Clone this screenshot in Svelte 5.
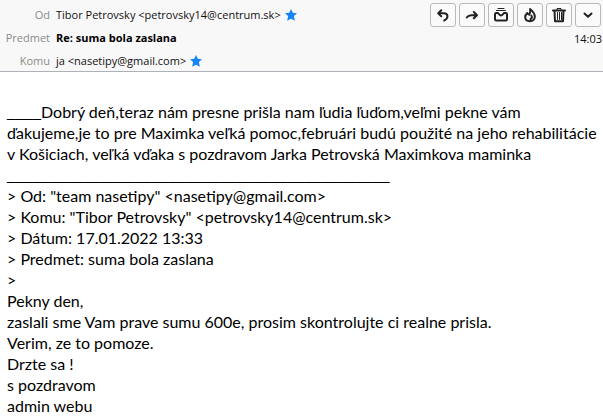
<script lang="ts">
  const quoted = [
    'Od: "team nasetipy" <nasetipy@gmail.com>',
    'Komu: "Tibor Petrovsky" <petrovsky14@centrum.sk>',
    "Dátum: 17.01.2022 13:33",
    "Predmet: suma bola zaslana",
    "",
  ];

  const original = [
    "Pekny den,",
    "zaslali sme Vam prave sumu 600e, prosim skontrolujte ci realne prisla.",
    "Verim, ze to pomoze.",
    "Drzte sa !",
    "s pozdravom",
    "admin webu",
  ];
</script>

{#snippet star()}
  <svg class="star" viewBox="0 0 12 12" width="12" height="12" aria-hidden="true">
    <path
      d="M6 0 7.800 3.800l4.200.4-3.100 2.900.9 4.600L6 9.700l-3.800 2 .9-4.600L0 4.200l4.200-.4z"
    />
  </svg>
{/snippet}

<header>
  <dl>
    <div class="row">
      <dt>Od</dt>
      <dd>Tibor Petrovsky &lt;petrovsky14@centrum.sk&gt; {@render star()}</dd>
    </div>
    <div class="row subject">
      <dt>Predmet</dt>
      <dd>Re: suma bola zaslana</dd>
    </div>
    <div class="row">
      <dt>Komu</dt>
      <dd>ja &lt;nasetipy@gmail.com&gt; {@render star()}</dd>
    </div>
  </dl>
  <div class="side">
    <div class="toolbar">
      <button aria-label="Odpovedať">
        <svg viewBox="0 0 16 16" width="16" height="16">
          <path d="M6.300 3.200 3.200 6.300l3.100 3.100M3.600 6.300h5.200c4.800 0 4.800 5.200.4 7.200" />
        </svg>
      </button>
      <button aria-label="Preposlať">
        <svg viewBox="0 0 16 16" width="16" height="16">
          <path d="M9.800 5 13 8.200l-3.200 3.100M12.600 8.200H7.300c-2.200 0-3.500.8-4.500 2.300" />
        </svg>
      </button>
      <button aria-label="Archivovať">
        <svg viewBox="0 0 16 16" width="16" height="16">
          <path class="thin" d="M5 1.500h6M3.500 3.500h9" />
          <path
            d="M2 7.200C2 6.400 2.600 6 3.200 6h1.500c.9 0 1.100 2.400 3.300 2.400S10.400 6 11.300 6h1.500c.6 0 1.200.4 1.200 1.200v5c0 .8-.5 1.300-1.300 1.300H3.300C2.500 13.500 2 13 2 12.200z"
          />
        </svg>
      </button>
      <button aria-label="Spam">
        <svg viewBox="0 0 16 16" width="16" height="16">
          <path
            d="M8 2c1 2.500-.1 3.900-.7 5.700C6.300 7.500 5.600 6.900 5.300 6 4 7.200 3.200 8.500 3.200 10c0 2.600 2.100 4.200 4.800 4.200s4.800-1.700 4.800-4.400C12.800 6.600 10.600 4 8 2zM9.300 8.500c1 1.500.8 2.700-.8 3.700"
          />
        </svg>
      </button>
      <button aria-label="Odstrániť">
        <svg viewBox="0 0 16 16" width="16" height="16">
          <path d="M2 3.500h12M3.500 3.500l.5 10.700h8l.5-10.700" />
          <path class="thin" d="M6 3V1.500h4V3M6.500 5.500v7M8.500 5.500v7M10.500 5.500v7" />
        </svg>
      </button>
      <button aria-label="Viac">
        <svg viewBox="0 0 16 16" width="16" height="16">
          <path d="m4.500 6.500 3.500 3.300 3.500-3.300" />
        </svg>
      </button>
    </div>
    <time>14:03</time>
  </div>
</header>

<main>
  <p>
    <span class="rule">____</span>Dobrý deň,teraz nám presne prišla nam ľudia ľuďom,veľmi pekne vám<br />
    ďakujeme,je to pre Maximka veľká pomoc,februári budú použité na jeho rehabilitácie<br />
    v Košiciach, veľká vďaka s pozdravom Jarka Petrovská Maximkova maminka
  </p>
  <p><span class="rule">{"_".repeat(45)}</span></p>
  {#each quoted as line}
    <p>&gt; {line}</p>
  {/each}
  {#each original as line}
    <p>{line}</p>
  {/each}
</main>

<style>
  :global(body) {
    margin: 0;
    background: #fff;
  }

  header {
    display: flex;
    justify-content: space-between;
    background: #f8f8f8;
    border-bottom: 1px solid #adb2b8;
    color: #111;
    font: 11px/16px "Open Sans", "Noto Sans", sans-serif;
  }

  dl {
    display: flex;
    flex-direction: column;
    gap: 7px;
    margin: 0;
    padding: 7px 0 2px;
  }

  .row {
    display: flex;
    gap: 6px;
  }

  dt {
    width: 50px;
    color: #8b8b8b;
    text-align: right;
  }

  dd {
    display: flex;
    align-items: center;
    gap: 4px;
    margin: 0;
    white-space: nowrap;
  }

  .subject dd {
    color: #000;
    font-weight: 700;
  }

  .star {
    fill: #1585f5;
  }

  .side {
    display: flex;
    flex-direction: column;
    align-items: flex-end;
    gap: 4px;
    padding: 3px 1px 0 0;
  }

  .toolbar {
    display: flex;
    gap: 3px;
    padding-right: 1px;
  }

  button {
    display: flex;
    align-items: center;
    justify-content: center;
    width: 26px;
    height: 24px;
    padding: 0;
    border: 1px solid #b9b9b9;
    border-radius: 3px;
    background: #fafafa;
    color: #222;
  }

  button path {
    fill: none;
    stroke: currentColor;
    stroke-width: 2;
    stroke-linecap: round;
    stroke-linejoin: round;
  }

  button .thin {
    stroke-width: 1;
  }

  main {
    padding: 29px 7px 0;
    color: #000;
    font: 16px/21px Lato, sans-serif;
    white-space: nowrap;
  }

  p {
    margin: 0;
  }

  .rule {
    font: 17px/1 "Liberation Serif", serif;
  }
</style>
